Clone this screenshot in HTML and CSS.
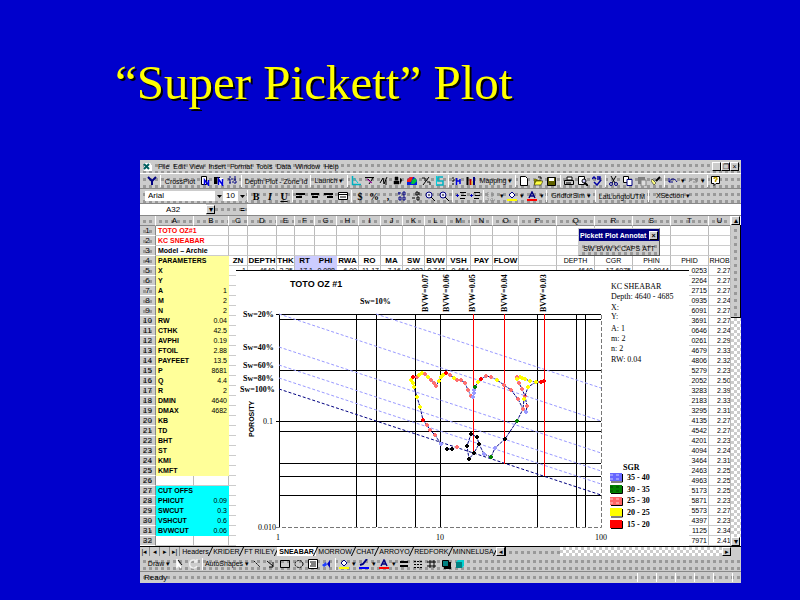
FILE: index.html
```html
<!DOCTYPE html>
<html lang="en">
<head>
    <meta charset="UTF-8">
    <meta name="viewport" content="width=device-width, initial-scale=1.0">
    <title>Super Pickett Plot</title>
    <link rel="stylesheet" href="styles.css">
</head>
<body>
    <h1>“Super Pickett” Plot</h1>

    <main class="window">
        <nav class="menubar dots">
            <svg class="icon" viewBox="0 0 10 10"><path d="M1 1h6l2 2v6H1z" fill="#fff"/><path d="M1 2l5 5M6 2L1 7" stroke="#006060" stroke-width="2"/></svg>
            <button>File</button><button>Edit</button><button>View</button><button>Insert</button><button>Format</button><button>Tools</button><button>Data</button><button>Window</button><button>Help</button>
            <span class="spacer"></span>
            <button class="box" aria-label="Minimize">_</button><button class="box" aria-label="Restore">❐</button><button class="box" aria-label="Close">×</button>
        </nav>

        <div class="toolbar dots" id="standardBar"></div>

        <div class="toolbar dots">
            <select class="field font-name" aria-label="Font"><option>Arial</option></select>
            <select class="field font-size" aria-label="Font size"><option>10</option></select>
            <span class="sep"></span>
            <span class="group" id="formatBar"></span>
        </div>

        <div class="formula dots">
            <input class="name-box" aria-label="Name box" value="A32">
            <button class="box" aria-label="Names">▾</button>
            <label class="equals" for="formulaInput">=</label>
            <input class="formula-input" id="formulaInput">
        </div>

        <div class="sheet">
            <table>
                <colgroup>
                    <col class="c16"><col class="c38"><col class="c35"><col class="c19"><col class="c29"><col class="c18"><col class="c20"><col class="c22"><col class="c22"><col class="c22"><col class="c22"><col class="c22"><col class="c22"><col class="c24"><col class="c22"><col class="c26"><col class="c38"><col class="c38"><col class="c38"><col class="c38"><col class="c38"><col>
                </colgroup>
                <thead><tr id="columnHeads"></tr></thead>
                <tbody id="sheetBody"></tbody>
            </table>

            <div class="scroll-v">
                <button class="box" aria-label="Scroll up">▴</button>
                <span class="thumb dots"></span>
                <span class="track"></span>
                <button class="box" aria-label="Scroll down">▾</button>
            </div>

            <section class="annotate">
                <div class="annotate-title"><span>Pickett Plot Annotat</span><button class="box" aria-label="Close toolbar">×</button></div>
                <div class="annotate-body dots"><button>SW</button><button>BVW</button><button>K</button><button>CAPS</button><button>ATT</button></div>
            </section>

            <svg class="chart" viewBox="236 270 453 276" preserveAspectRatio="none">
                <rect x="236" y="270" width="453" height="276" fill="#fff"/>
                <path d="M236 270.500H689" stroke="#000"/>
                <text class="plot-title" x="290" y="287">TOTO OZ #1</text>

                <!-- log grid -->
                <path class="grid" d="M279.500 314V527M356.500 314V527M376.500 314V527M415.500 314V527M440.500 314V527M537.500 314V527M576.500 314V527M585.500 314V527M276 314.500H601M279 319.500H601M279 370.500H601M276 421.500H601M279 431.500H601M279 463.500H601M279 476.500H601M279 495.500H601"/>
                <path class="edge" d="M276 527.500H601.500V314"/>

                <!-- water saturation lines -->
                <path class="sw" d="M376 314L601 388M279 314L601 421M279 347L601 453M279 365L601 471M279 378L601 484"/>
                <path class="sw full" d="M279 389L601 495"/>

                <!-- bulk volume water lines -->
                <path class="bvw" d="M473.500 314V453M504.500 314V464M544.500 314V476"/>

                <g id="curve"></g>

                <g class="serif">
                    <text x="243" y="317">Sw=20%</text>
                    <text x="243" y="350">Sw=40%</text>
                    <text x="243" y="368">Sw=60%</text>
                    <text x="243" y="381">Sw=80%</text>
                    <text x="240" y="392">Sw=100%</text>
                    <text x="360" y="304">Sw=10%</text>
                    <text transform="translate(428 312) rotate(-90)">BVW=0.07</text>
                    <text transform="translate(449 312) rotate(-90)">BVW=0.06</text>
                    <text transform="translate(475 312) rotate(-90)">BVW=0.05</text>
                    <text transform="translate(507 312) rotate(-90)">BVW=0.04</text>
                    <text transform="translate(546 312) rotate(-90)">BVW=0.03</text>
                    <text x="623" y="470">SGR</text>
                    <text x="627" y="480">35 - 40</text>
                    <text x="627" y="492">30 - 35</text>
                    <text x="627" y="503">25 - 30</text>
                    <text x="627" y="515">20 - 25</text>
                    <text x="627" y="527">15 - 20</text>
                </g>
                <g class="serif thin">
                    <text x="611" y="289">KC SHEABAR</text>
                    <text x="611" y="299">Depth: 4640 - 4685</text>
                    <text x="611" y="310">X:</text>
                    <text x="611" y="319">Y:</text>
                    <text x="611" y="331">A: 1</text>
                    <text x="611" y="341">m: 2</text>
                    <text x="611" y="351">n: 2</text>
                    <text x="611" y="362">RW: 0.04</text>
                    <text x="263" y="424">0.1</text>
                    <text x="258" y="530">0.010</text>
                    <text x="276" y="540">1</text>
                    <text x="436" y="540">10</text>
                    <text x="595" y="540">100</text>
                </g>
                <text class="axis-title" transform="translate(254 437) rotate(-90)">POROSITY</text>

                <g class="swatches">
                    <path d="M611 482H622.500V474M611 493.500H622.500V486M611 505.500H622.500V498M611 517H622.500V509M611 528.500H622.500V521" fill="none" stroke="#000"/>
                    <rect x="610" y="473" width="12" height="8" fill="#6666ff"/>
                    <path d="M610 475H622M610 479H622" stroke="#9999ff" stroke-width="2" stroke-dasharray="3 3"/>
                    <rect x="610" y="485" width="12" height="8" fill="#008000"/>
                    <path d="M610 487H622M610 491H622" stroke="#006000" stroke-width="2" stroke-dasharray="3 3"/>
                    <rect x="610" y="497" width="12" height="8" fill="#ff6666"/>
                    <path d="M610 499H622M610 503H622" stroke="#ff9999" stroke-width="2" stroke-dasharray="3 3"/>
                    <rect x="610" y="508" width="12" height="8" fill="#ffff00"/>
                    <rect x="610" y="520" width="12" height="8" fill="#ff0000"/>
                </g>
            </svg>
        </div>

        <div class="tabs">
            <div class="tab-nav"><button aria-label="First sheet">|◂</button><button aria-label="Previous sheet">◂</button><button aria-label="Next sheet">▸</button><button aria-label="Last sheet">▸|</button></div>
            <div class="tab-list">
                <button>Headers</button><button>KRIDER</button><button>FT RILEY</button><button class="active">SNEABAR</button><button>MORROW</button><button>CHAT</button><button>ARROYO</button><button>REDFORK</button><button>MINNELUSA</button>
            </div>
            <div class="scroll-h">
                <button class="box" aria-label="Scroll left">◂</button>
                <span class="thumb dots"></span>
                <span class="track"></span>
                <button class="box" aria-label="Scroll right">▸</button>
            </div>
        </div>

        <div class="toolbar drawing dots" id="drawBar"></div>

        <footer class="status dots"><span class="ready">Ready</span><span></span><span></span><span></span><span></span><span></span></footer>
    </main>

    <script>
        // 10x10 icon drawings
        const icons = {
            funnel: '<path d="M1 1l4 4 4-4M5 5v4" stroke="#000080" stroke-width="2"/>',
            pageN: '<path d="M1.500 .500h5v8h-5z" fill="#fff" stroke="#000"/><path d="M4.500 9V4l4 5V4" stroke="#0000e0" stroke-width="1.500"/>',
            darkN: '<path d="M0 1h6v7H0z" fill="#000"/><path d="M3.500 2h6v7h-6z" fill="#fff"/><path d="M4.500 9V3l4 6V3" stroke="#0000e0" stroke-width="1.500"/>',
            levels: '<path d="M2 0v9M7 0v9M0 3h9M1 6h9" stroke="#000080" stroke-dasharray="2 1"/>',
            axes: '<path d="M1.500 0v8.500H10" stroke="#00b0c0" stroke-width="1.500"/><path d="M3 2l4 5" stroke="#00c8d8"/>',
            cross: '<path d="M0 1.500h9M8 2L4 8M3 3l4 4" stroke="#000"/><path d="M2 3l5 4" stroke="#c000c0"/>',
            wave: '<path d="M1 7l3-5 1 6 3-7M7 4v5" stroke="#000"/>',
            people: '<path d="M2 1h3v3H2zM1 5h5v3H1zM7 2l2 2-2 4" fill="#000" stroke="#000" stroke-width=".5"/>',
            map: '<path d="M0 9V4l3-3h4l3 3v5z" fill="#0020e0"/><path d="M0 4l3-3h3L4 6H0z" fill="#f02020"/><path d="M5 4l3-2 2 3-3 3H4z" fill="#00c040"/>',
            curve: '<path d="M1 2h3v3M8 1L2 9M6 6h3v3" stroke="#000"/>',
            column: '<path d="M8 1H3v4h5v4H1" stroke="#00b0c0" stroke-width="1.500"/><path d="M1.500 0v9" stroke="#00d0e0"/>',
            align: '<path d="M1 1v8M1 4h3" stroke="#000" stroke-dasharray="2 1"/><path d="M4.500 2v7M5 5h3M8 3v5" stroke="#0000e0" stroke-width="1.500"/>',
            bars: '<path d="M1.500 1v8" stroke="#000" stroke-width="2"/><path d="M4.500 3v6" stroke="#c00000" stroke-width="2"/><path d="M6 5v4" stroke="#e0c000"/><path d="M8 1v8" stroke="#000080" stroke-width="2"/>',
            page: '<path d="M1.500 .500h5l2 2v7h-7z" fill="#fff" stroke="#000"/>',
            open: '<path d="M1 3h3l1 1h3v5H1z" fill="#808000"/><path d="M3 5h7L8 9H1z" fill="#ffff40" stroke="#000" stroke-width=".5"/><path d="M5 1h3v2" stroke="#000"/>',
            save: '<path d="M.500 1.500h8v8h-8z" fill="#606000" stroke="#000"/><path d="M2 2h5v3H2z" fill="#fff"/>',
            print: '<path d="M3 1h5v3H3z" fill="#fff" stroke="#000"/><path d="M.500 4.500h9v4h-9z" fill="#ccc" stroke="#000"/><path d="M2 7h5" stroke="#000"/>',
            preview: '<path d="M.500 .500h6v8h-6z" fill="#fff" stroke="#000"/><circle cx="6" cy="5" r="2" fill="#ccf" stroke="#000"/><path d="M7 7l3 3" stroke="#000" stroke-width="2"/>',
            spell: '<path d="M0 3l2-2 2 2M5 1h3v2H5M2 6l3 3 4-5" stroke="#0000a0" stroke-width="1.500"/>',
            cut: '<path d="M2 0l4 7M7 0L3 7" stroke="#000"/><circle cx="2" cy="8" r="1.500" stroke="#000080"/><circle cx="7" cy="8" r="1.500" stroke="#000080"/>',
            copy: '<path d="M.500 .500h5v6h-5z" fill="#fff" stroke="#000"/><path d="M4 3.500h5v6H4z" fill="#fff" stroke="#000080"/>',
            paste: '<path d="M1 1h7v7H1z" fill="#808080"/><path d="M4 4h5v6H4z" fill="#ddd" stroke="#808080"/>',
            brush: '<path d="M9 1L5 5" stroke="#000" stroke-width="2"/><path d="M1 3l4 4-2 2-3-4z" fill="#ffff80" stroke="#000" stroke-width=".5"/>',
            undo: '<path d="M1 2v4h4M1 6c2-4 6-4 8 0" stroke="#000080"/>',
            redo: '<path d="M9 2v4H5M9 6C7 2 3 2 1 6" stroke="#888"/>',
            help: '<path d="M.500 .500h8v7H5L3 9.500v-2H.500z" fill="#fff" stroke="#000"/><path d="M3 3c0-2 3-2 3 0L4.500 4.500V6" stroke="#c0a000" stroke-width="1.500"/>',
            left: '<path d="M0 3h9M0 6h6" stroke="#000" stroke-width="2"/>',
            center: '<path d="M1 3h8M2 6h6" stroke="#000" stroke-width="2"/>',
            right: '<path d="M0 3h9M3 6h6" stroke="#000" stroke-width="2"/>',
            merge: '<path d="M.500 1.500h9v7h-9z" fill="#fff" stroke="#000"/><path d="M0 3.500h10M2 6h6" stroke="#000"/>',
            decUp: '<path d="M1 2h3M2 1v3M6 1h2v3H6zM2 6h2v3H2zM6 6h2v3H6z" stroke="#000080"/>',
            decDown: '<path d="M5 1h2v3H5zM8 1v3M1 7h3M6 6h2v3H6z" stroke="#000"/>',
            zoom: '<circle cx="4" cy="4" r="3" fill="#eef" stroke="#000080"/><path d="M3 4h2M6 6l4 4" stroke="#000"/>',
            indent: '<path d="M4 1.500h6M5 4.500h5M4 7.500h5" stroke="#000"/><path d="M0 4.500h3M1.500 3v3" stroke="#0000c0"/>',
            borders: '<path d="M1 9h8M1 1v7M5 1v7" stroke="#888" stroke-dasharray="1 1"/>',
            fill: '<path d="M2 4l3-3 3 3-3 3z" fill="#fff" stroke="#000080"/><path d="M0 9h10" stroke="#ffff00" stroke-width="2"/>',
            line: '<path d="M8 0L4 5l-3 1" stroke="#000080" stroke-width="2"/><path d="M0 9h10" stroke="#0000ff" stroke-width="2"/>',
            color: '<path d="M2 7l3-6 3 6M3 5h4" stroke="#000080" stroke-width="1.500"/><path d="M0 9h10" stroke="#ff0000" stroke-width="2"/>',
            arrow: '<path d="M2 0v8l2-2 2 3" fill="#fff" stroke="#fff" stroke-width="1.500"/><path d="M3 1l4 5" stroke="#000"/>',
            rotate: '<path d="M8 3a4 4 0 1 0 0 4M8 0v3H5" stroke="#eee" stroke-width="1.500"/>',
            diag: '<path d="M2 2l6 6" stroke="#000" stroke-dasharray="2 1"/>',
            diagArrow: '<path d="M1 2l6 5M7 3v5H3" stroke="#000"/>',
            rect: '<path d="M.500 1.500h9v7h-9z" stroke="#000"/>',
            oval: '<ellipse cx="5" cy="5" rx="4" ry="3.500" stroke="#000" stroke-dasharray="2 1"/>',
            textBox: '<path d="M.500 .500h9v9h-9z" fill="#fff" stroke="#000"/><path d="M2 3h6M3 5h5M2 7h6" stroke="#000"/>',
            wordArt: '<path d="M0 6l4-3 1 3-3 2z" fill="#2040ff"/><path d="M8 1v8L5 5z" fill="#0000c0"/>',
            lineStyle: '<path d="M1 3h8M1 7h8" stroke="#000" stroke-width="2"/>',
            dashStyle: '<path d="M1 2.500h8M1 5.500h8M1 8.500h8" stroke="#000" stroke-dasharray="2 1"/>',
            arrowStyle: '<path d="M0 3h9M0 7h9M3 1v8M7 1v8" stroke="#000"/>',
            shadow: '<path d="M3 3h7v7H3z" fill="#000"/><path d="M1.500 1.500h6v6h-6z" fill="#008080" stroke="#000"/>',
            cube: '<path d="M1 3h6v6H1z" fill="#008080"/><path d="M1 3l2-2h6L7 3zM7 3l2-2v6L7 9z" fill="#00d0d0"/>'
        };

        const standardItems = ['funnel', '|', 'text36:CrossPlot', 'pageN', 'darkN', 'levels', '|', 'text66:Depth Plot - Zone Id', '|', 'text34:Launch ▾', '|',
            'axes', 'cross', 'wave', 'people', 'map', 'curve', 'column', '|', 'align', 'bars', 'text36:Mapping ▾', '|', 'page', 'open', 'save', '|',
            'print', 'preview', 'spell', '|', 'cut', 'copy', 'paste', 'brush', '|', 'undo', '▾', 'redo', '▾', '|', 'help'];
        const formatItems = ['b:B', 'i:I', 'u:U', '|', 'left', 'center', 'right', 'merge', '|', 'b:$', 'b:%', 'b:,', 'decUp', 'decDown', 'zoom', 'zoom', '|', 'indent', 'indent', '|',
            'borders', '▾', 'fill', '▾', 'color', '▾', '|', 'text46:GridforSim ▾', '|', 'text50:LatLongtoUTM', '|', 'text46:XSection ▾'];
        const drawItems = ['text28:Draw ▾', 'arrow', 'rotate', '|', 'text46:AutoShapes ▾', 'diag', 'diagArrow', 'rect', 'oval', 'textBox', 'wordArt', '|',
            'fill', '▾', 'line', '▾', 'color', '▾', 'lineStyle', 'dashStyle', 'arrowStyle', 'shadow', 'cube'];

        function renderToolbar(id, items) {
            document.getElementById(id).innerHTML = items.map(item => {
                if (item === '|') return '<span class="sep"></span>';
                if (item === '▾') return '<button class="drop" aria-label="More">▾</button>';
                if (item.includes(':')) {
                    const [kind, label] = item.split(':');
                    return `<button class="tool ${kind}">${label}</button>`;
                }
                return `<button class="tool" aria-label="${item}"><svg class="icon" viewBox="0 0 10 10" fill="none">${icons[item]}</svg></button>`;
            }).join('');
        }

        const labels = {
            5: ['X', ''], 6: ['Y', ''], 7: ['A', '1'], 8: ['M', '2'], 9: ['N', '2'], 10: ['RW', '0.04'], 11: ['CTHK', '42.5'], 12: ['AVPHI', '0.19'],
            13: ['FTOIL', '2.88'], 14: ['PAYFEET', '13.5'], 15: ['P', '8681'], 16: ['Q', '4.4'], 17: ['R', '2'], 18: ['DMIN', '4640'], 19: ['DMAX', '4682'],
            20: ['KB', ''], 21: ['TD', ''], 22: ['BHT', ''], 23: ['ST', ''], 24: ['KMI', ''], 25: ['KMFT', ''],
            27: ['CUT OFFS', ''], 28: ['PHICUT', '0.09'], 29: ['SWCUT', '0.3'], 30: ['VSHCUT', '0.6'], 31: ['BVWCUT', '0.06']
        };
        const heads = ['ZN', 'DEPTH', 'THK', 'RT', 'PHI', 'RWA', 'RO', 'MA', 'SW', 'BVW', 'VSH', 'PAY', 'FLOW', '', 'DEPTH', 'CGR', 'PHIN', 'PHID', 'RHOB'];
        const firstRow = ['1', '4640', '2.25', '17.1', '0.088', '6.00', '11.17', '7.16', '0.083', '0.747', '0.454', '', '', '', '4640', '17.6075', '0.0944'];
        const phid = ['0253', '2264', '2715', '0935', '6091', '3691', '0646', '0261', '4679', '4806', '5279', '2052', '3283', '2183',
            '3295', '4135', '4542', '4201', '4094', '3464', '2463', '4963', '5173', '5871', '5573', '4397', '1125', '7971'];
        const rhob = ['2.27', '2.27', '2.27', '2.24', '2.27', '2.27', '2.24', '2.29', '2.33', '2.32', '2.23', '2.50', '2.39', '2.33',
            '2.31', '2.27', '2.27', '2.23', '2.24', '2.31', '2.25', '2.25', '2.25', '2.23', '2.27', '2.23', '2.34', '2.41'];

        function renderSheet() {
            document.getElementById('columnHeads').innerHTML =
                '<th class="dots"></th>' + [...'ABCDEFGHIJKLMNOPQRSTU'].map(c => `<th class="dots">${c}</th>`).join('');

            let html = '';
            for (let r = 1; r <= 32; r++) {
                html += `<tr><th class="dots">${r}</th>`;
                if (r <= 4) {
                    const text = ['TOTO OZ#1', 'KC SNEABAR', 'Model – Archie', 'PARAMETERS'][r - 1];
                    html += `<td colspan="2" class="label ${r < 3 ? 'red' : ''} ${r === 4 ? 'yellow' : ''}">${text}</td>`;
                } else {
                    const [name, value] = labels[r] || ['', ''];
                    const color = r <= 25 ? 'yellow' : (labels[r] ? 'cyan' : '');
                    html += `<td class="label ${color}">${name}</td><td class="value ${color}">${value}</td>`;
                }
                for (let c = 0; c < 19; c++) {
                    let text = '', cls = '';
                    if (r === 4) {
                        text = heads[c];
                        cls = c < 13 ? 'head' : 'head light';
                    } else if (r >= 5) {
                        text = c === 17 ? phid[r - 5] : c === 18 ? rhob[r - 5] : r === 5 ? (firstRow[c] || '') : '';
                        cls = c === 18 ? 'last' : 'value';
                    }
                    if ((r === 4 || r === 5) && (c === 3 || c === 4)) cls += ' lilac';
                    html += `<td class="${cls}">${text}</td>`;
                }
                html += '</tr>';
            }
            document.getElementById('sheetBody').innerHTML = html;
        }

        // log readings joined in depth order: x, y, colour by SGR
        const colors = { y: '#ffff00', r: '#ff0000', p: '#ff7070', g: '#008000', b: '#9999ff', k: '#000000' };
        const runs = [
            [[441, 444, 'b'], [435, 435, 'p'], [430, 430, 'p'], [427, 425, 'p'], [423, 420, 'r'], [420, 407, 'y'], [417, 397, 'y'], [414, 387, 'y'], [413, 383, 'y'], [411, 380, 'y'],
             [413, 377, 'r'], [417, 377, 'p'], [419, 375, 'y'], [422, 373, 'y'], [425, 374, 'p'], [428, 377, 'y'], [431, 380, 'p'], [434, 383, 'p'], [436, 386, 'p'], [439, 381, 'y'], [441, 377, 'y'], [443, 375, 'y'],
             [446, 373, 'r'], [450, 375, 'p'], [454, 378, 'y'], [457, 380, 'p'], [461, 380, 'p'], [465, 383, 'p'], [468, 390, 'p'], [471, 396, 'p'], [473, 397, 'b'], [474, 393, 'b'], [474, 390, 'b'],
             [475, 387, 'g'], [478, 382, 'y'], [481, 379, 'r'], [486, 376, 'p'], [491, 377, 'p'], [497, 380, 'y'], [504, 385, 'p'], [511, 390, 'p'], [518, 399, 'p'], [523, 409, 'p']],
            [[544, 381, 'r'], [541, 382, 'r'], [536, 382, 'y'], [530, 381, 'y'], [525, 379, 'y'], [522, 378, 'y'], [520, 377, 'y'], [517, 377, 'p'], [517, 379, 'y'], [519, 383, 'p'], [522, 389, 'p'], [525, 396, 'p'],
             [527, 406, 'p'], [526, 412, 'b'], [523, 409, 'p'], [517, 421, 'g'], [505, 439, 'k'], [495, 448, 'b'], [491, 457, 'g'], [484, 454, 'b'], [479, 444, 'k'], [477, 437, 'k'], [471, 434, 'k'],
             [467, 446, 'k'], [469, 459, 'k'], [474, 453, 'k'], [479, 444, 'k']],
            [[536, 382, 'y'], [528, 387, 'y'], [524, 399, 'y'], [523, 409, 'p']],
            [[447, 449, 'k'], [452, 449, 'k'], [457, 447, 'p']]
        ];

        function renderCurve() {
            document.getElementById('curve').innerHTML = runs.map(run => {
                const path = run.map(p => p[0] + ',' + p[1]).join(' ');
                const marks = run.map(([x, y, c]) => `<path d="M${x - 1} ${y - 2}h2v1h1v2h-1v1h-2v-1h-1v-2h1z" fill="${colors[c]}"/>`).join('');
                return `<polyline points="${path}"/>${marks}`;
            }).join('');
        }

        renderToolbar('standardBar', standardItems);
        renderToolbar('formatBar', formatItems);
        renderToolbar('drawBar', drawItems);
        renderSheet();
        renderCurve();
    </script>
</body>
</html>
```
FILE: styles.css
```css
body {
    margin: 0;
    background-color: #0000cc;
    font-family: "Liberation Sans", Arial, sans-serif;
    font-size: 8px;
    color: #000;
}

h1 {
    margin: 0;
    padding: 53px 0 47px 115px;
    font: 49px/60px "Liberation Serif", "Times New Roman", serif;
    color: #ffff00;
    text-shadow: 2px 2px 0 #000;
}

button, input, select {
    font: inherit;
    color: inherit;
    margin: 0;
    padding: 0;
    border: none;
    border-radius: 0;
    background: none;
    box-sizing: border-box;
}

.window {
    display: flex;
    flex-direction: column;
    margin: 0 59px 17px 140px;
    background-color: #ccc;
}

/* grey halftone of the window chrome */
.dots {
    background-color: #ccc;
    background-image: linear-gradient(to right, #ccc 3px, transparent 3px), linear-gradient(#ccc 4px, #999 4px);
    background-size: 6px 7px;
}

.menubar, .toolbar, .formula, .status, .group {
    display: flex;
    align-items: center;
    box-sizing: border-box;
}

.menubar {
    height: 14px;
    padding: 0 2px 0 3px;
    border-bottom: 1px solid #fff;
    font-size: 7px;
}

.menubar button {
    padding: 0 2px;
}

.menubar > .icon {
    margin-right: 3px;
}

.spacer {
    flex: 1;
}

.icon {
    display: block;
    width: 10px;
    height: 10px;
    flex: none;
}

button.box {
    flex: none;
    width: 9px;
    height: 9px;
    padding: 0;
    line-height: 7px;
    text-align: center;
    background-color: #ccc;
    border: 1px solid #000;
    border-top-color: #fff;
    border-left-color: #fff;
    overflow: hidden;
}

.toolbar {
    height: 15px;
    padding-left: 5px;
    border-bottom: 1px solid #888;
    overflow: hidden;
}

.tool {
    display: flex;
    flex: none;
    width: 14px;
    height: 12px;
    align-items: center;
    justify-content: center;
    white-space: nowrap;
}

.sep {
    flex: none;
    width: 1px;
    height: 12px;
    margin: 0 1px;
    background-color: #fff;
}

.drop {
    flex: none;
    width: 6px;
    font-size: 7px;
}

.text28, .text34, .text36, .text46, .text50, .text66 {
    font-size: 7px;
}

.text28 { width: 28px; }
.text34 { width: 34px; }
.text36 { width: 36px; }
.text46 { width: 46px; }
.text50 { width: 50px; }
.text66 { width: 66px; }

.b, .i, .u {
    font-family: "Liberation Serif", serif;
    font-size: 10px;
    font-weight: bold;
}

.i { font-style: italic; }
.u { text-decoration: underline; }

.field {
    appearance: none;
    flex: none;
    height: 10px;
    padding-left: 3px;
    line-height: 10px;
    background: #fff url("data:image/svg+xml,%3Csvg xmlns='http://www.w3.org/2000/svg' width='8' height='10'%3E%3Cpath fill='%23ccc' d='M0 0h8v10H0z'/%3E%3Cpath d='M2 4h5L4.500 7z'/%3E%3C/svg%3E") right center no-repeat;
}

.font-name {
    width: 78px;
}

.font-size {
    width: 23px;
}

.formula {
    height: 12px;
    border-bottom: 1px solid #888;
}

.name-box {
    width: 66px;
    height: 11px;
    background-color: #fff;
    text-align: center;
}

.equals {
    flex: none;
    width: 32px;
    text-align: right;
    padding-right: 2px;
    box-sizing: border-box;
    font-weight: bold;
}

.formula-input {
    flex: 1;
    height: 11px;
    background-color: #fff;
}

.sheet {
    position: relative;
    display: flex;
    background-color: #fff;
}

table {
    flex: 1;
    width: 0;
    table-layout: fixed;
    border-spacing: 0;
}

.c16 { width: 16px; }
.c18 { width: 18px; }
.c19 { width: 19px; }
.c20 { width: 20px; }
.c22 { width: 22px; }
.c24 { width: 24px; }
.c26 { width: 26px; }
.c29 { width: 29px; }
.c35 { width: 35px; }
.c38 { width: 38px; }

th, td {
    height: 10px;
    padding: 0 2px;
    box-sizing: border-box;
    border-right: 1px solid #bbb;
    border-bottom: 1px solid #ccc;
    font-size: 7px;
    line-height: 9px;
    white-space: nowrap;
    overflow: hidden;
}

th {
    padding: 0;
    font-size: 8px;
    font-weight: normal;
    border-right-color: #888;
    border-bottom-color: #fff;
}

thead th {
    border-right-color: #fff;
    border-bottom-color: #888;
}

.label {
    font-weight: bold;
}

.value {
    padding: 0 1px 0 0;
    text-align: right;
}

.last {
    padding: 0 0 0 8px;
}

.head {
    padding: 0;
    font-size: 8px;
    font-weight: bold;
    text-align: center;
}

.light {
    font-size: 7px;
    font-weight: normal;
}

.red { color: #ff0000; }
.yellow { background-color: #ffff99; border-color: #ffff99; }
.cyan { background-color: #00ffff; border-color: #00ffff; }
.lilac { background-color: #ccccff; border-color: #ccccff; }

.scroll-v {
    display: flex;
    flex-direction: column;
    width: 10px;
}

.scroll-v .thumb {
    height: 92px;
    border-right: 1px solid #000;
    border-bottom: 1px solid #000;
}

.track {
    flex: 1;
    background: repeating-conic-gradient(#ccc 0 25%, #fff 0 50%) 0 0 / 6px 6px;
}

.annotate {
    position: absolute;
    top: 12px;
    right: 81px;
    width: 82px;
    box-sizing: border-box;
    border: 1px solid #ccc;
    border-right-color: #555;
    border-bottom-color: #555;
    background-color: #ccc;
}

.annotate-title {
    display: flex;
    align-items: center;
    height: 12px;
    padding: 0 1px;
    background-color: #000080;
    color: #fff;
    font-size: 7px;
    font-weight: bold;
}

.annotate-title span {
    flex: 1;
    white-space: nowrap;
}

.annotate-title .box {
    color: #000;
}

.annotate-body {
    display: flex;
    justify-content: center;
    gap: 2px;
    height: 14px;
    font-size: 7px;
}

.chart {
    position: absolute;
    top: 54px;
    left: 96px;
    width: calc(100% - 148px);
    height: calc(100% - 54px);
}

.grid { stroke: #000; fill: none; }
.edge { stroke: #777; fill: none; stroke-dasharray: 4 2; }
.sw { stroke: #9999ff; stroke-dasharray: 3 2; fill: none; }
.full { stroke: #000080; }
.bvw { stroke: #ff0000; }

#curve polyline {
    fill: none;
    stroke: #000080;
    stroke-dasharray: 3 1;
}

.plot-title {
    font-size: 9px;
    font-weight: bold;
}

.serif {
    font-family: "Liberation Serif", serif;
    font-size: 8px;
    font-weight: bold;
}

.thin {
    font-weight: normal;
}

.axis-title {
    font-size: 7px;
    font-weight: bold;
}

.tabs {
    display: flex;
    height: 10px;
    font-size: 7px;
    line-height: 9px;
    border-top: 1px solid #000;
    box-sizing: border-box;
}

.tab-nav {
    display: flex;
    width: 40px;
}

.tab-nav button {
    flex: 1;
    border-right: 1px solid #888;
}

.tab-list {
    display: flex;
    width: 316px;
    overflow: hidden;
}

.tab-list button {
    position: relative;
    flex: 1 0 auto;
    padding: 0 2px;
    white-space: nowrap;
}

.tab-list button::after {
    content: "";
    position: absolute;
    top: 0;
    right: 0;
    width: 1px;
    height: 9px;
    background-color: #000;
    transform: skewX(-25deg);
}

.tab-list .active {
    background-color: #fff;
    font-weight: bold;
}

.scroll-h {
    display: flex;
    flex: 1;
    padding-right: 10px;
}

.scroll-h .thumb {
    width: 54px;
    border-left: 1px solid #000;
}

.drawing {
    height: 16px;
}

.status {
    height: 11px;
    padding-right: 8px;
}

.status span {
    width: 18px;
    height: 9px;
    border-right: 1px solid #fff;
}

.status .ready {
    flex: 1;
    padding-left: 4px;
    line-height: 9px;
}
```
